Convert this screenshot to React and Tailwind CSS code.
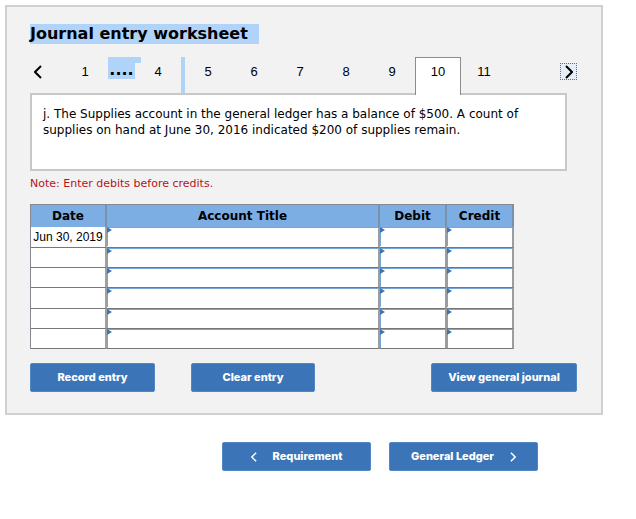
import { useState } from "react";

const COLUMNS = ["Account Title", "Debit", "Credit"];
const ROWS = ["Jun 30, 2019", "", "", "", "", ""];

function Chevron({ flip, className, strokeWidth }) {
  return (
    <svg
      viewBox="0 0 8 14"
      fill="none"
      stroke="currentColor"
      strokeWidth={strokeWidth}
      className={className}
      aria-hidden="true"
    >
      <path d={flip ? "M1 1 L7 7 L1 13" : "M7 1 L1 7 L7 13"} />
    </svg>
  );
}

function EntryButton({ className, children }) {
  return (
    <button
      type="button"
      className={`h-[29px] rounded-[2px] border border-[#5287c1] bg-[#3c75b7] font-['Inter',sans-serif] text-[11px] font-extrabold text-white ${className}`}
    >
      {children}
    </button>
  );
}

function Tab({ number, active, onSelect }) {
  return (
    <button
      type="button"
      onClick={() => onSelect(number)}
      className={
        active === number
          ? "relative h-[38px] w-[46px] border border-b-0 border-[#8c8c8c] bg-white pb-[9px]"
          : "h-9 w-[46px] pb-[6px]"
      }
    >
      {number}
    </button>
  );
}

export default function App() {
  const [active, setActive] = useState(10);

  return (
    <div className="bg-white pt-[5px] pl-[5px] font-['DejaVu_Sans',sans-serif] text-black">
      <div className="mr-[33px] border-2 border-[#d0d0d0] bg-[#f2f2f2] pt-[17px] pr-6 pb-[21px] pl-[23px]">
        <h1 className="w-fit bg-[#b0d3fa] pr-[11px] text-[16px] leading-[20px] font-bold">
          Journal entry worksheet
        </h1>

        {/* Entry tabs */}
        <div className="mt-[13px] flex h-9 font-['Liberation_Sans',sans-serif] text-[13px]">
          <button type="button" aria-label="Previous" className="flex w-8 items-center pb-[6px] pl-1">
            <Chevron className="h-[14px] w-2" strokeWidth={2} />
          </button>
          <Tab number={1} active={active} onSelect={setActive} />
          <div className="relative h-[22px] w-[27px] bg-[#b0d3fa] pt-[3px] text-center font-['DejaVu_Sans',sans-serif] text-[16px] leading-[20px] font-bold">
            ....
            <span className="absolute top-0 left-full h-[6px] w-[6px] bg-[#b0d3fa]" />
          </div>
          <Tab number={4} active={active} onSelect={setActive} />
          <div className="w-1 bg-[#b0d3fa]" />
          {[5, 6, 7, 8, 9, 10, 11].map((n) => (
            <Tab key={n} number={n} active={active} onSelect={setActive} />
          ))}
          <button
            type="button"
            aria-label="Next"
            className="mt-[6px] ml-auto flex h-[17px] w-[17px] items-center justify-center border border-dotted border-[#3c75b7] bg-[#e6eef7]"
          >
            <Chevron flip className="h-[14px] w-2" strokeWidth={2} />
          </button>
        </div>

        <div className="mr-[10px] h-[78px] border-2 border-[#c8c8c8] bg-white py-[11px] pr-4 pl-[11px] text-[12px] leading-[16px]">
          j. The Supplies account in the general ledger has a balance of $500. A count of supplies on hand at June 30, 2016 indicated $200 of supplies remain.
        </div>

        <p className="mt-[5px] text-[11px] leading-[16px] text-[#b3141d]">
          Note: Enter debits before credits.
        </p>

        {/* Journal */}
        <table className="mt-3 w-[484px] table-fixed border-separate border-spacing-0 border-t border-l border-[#858a90]">
          <colgroup>
            <col className="w-[76px]" />
            <col />
            <col className="w-[67px]" />
            <col className="w-[67px]" />
          </colgroup>
          <thead>
            <tr className="h-[22px] bg-[#7caee3] text-[12px] leading-[20px]">
              <th className="border-r-2 border-[#7a91ab] p-0">Date</th>
              {COLUMNS.map((name) => (
                <th key={name} className="border-r-2 border-[#7a91ab] p-0">
                  {name}
                </th>
              ))}
            </tr>
          </thead>
          <tbody>
            {ROWS.map((date, i) => (
              <tr key={i} className="h-5 bg-white nth-[3n+1]:h-[21px]">
                <td className="border-r-2 border-b border-r-[#a0a0a0] border-b-[#777777] p-0 text-center font-['Liberation_Sans',sans-serif] text-[12px] leading-[18px] whitespace-nowrap">
                  {date}
                </td>
                {COLUMNS.map((name) => (
                  <td key={name} className="relative border-r-2 border-b border-r-[#9a9da1] border-b-[#777777] p-0 align-top">
                    <input
                      type="text"
                      aria-label={`${name}, row ${i + 1}`}
                      className="block h-[19px] w-full border-t border-l border-[#79a5d6] bg-white px-2 text-[12px] outline-none"
                    />
                    <svg viewBox="0 0 5 6" className="absolute top-0 left-0 h-[6px] w-[5px] fill-[#3c75b7]" aria-hidden="true">
                      <path d="M0 0 L5 3 L0 6 Z" />
                    </svg>
                  </td>
                ))}
              </tr>
            ))}
          </tbody>
        </table>

        <div className="mt-[14px] flex">
          <EntryButton className="w-[125px]">Record entry</EntryButton>
          <EntryButton className="ml-9 w-[124px]">Clear entry</EntryButton>
          <EntryButton className="ml-auto w-[146px]">View general journal</EntryButton>
        </div>
      </div>

      {/* Step navigation */}
      <div className="mt-[27px] mr-[98px] flex justify-end gap-[18px]">
        <EntryButton className="flex w-[149px] items-center justify-center gap-4">
          <Chevron className="h-[10px] w-[6px]" strokeWidth={2} />
          Requirement
        </EntryButton>
        <EntryButton className="flex w-[149px] items-center justify-center gap-4">
          General Ledger
          <Chevron flip className="h-[10px] w-[6px]" strokeWidth={2} />
        </EntryButton>
      </div>
    </div>
  );
}
